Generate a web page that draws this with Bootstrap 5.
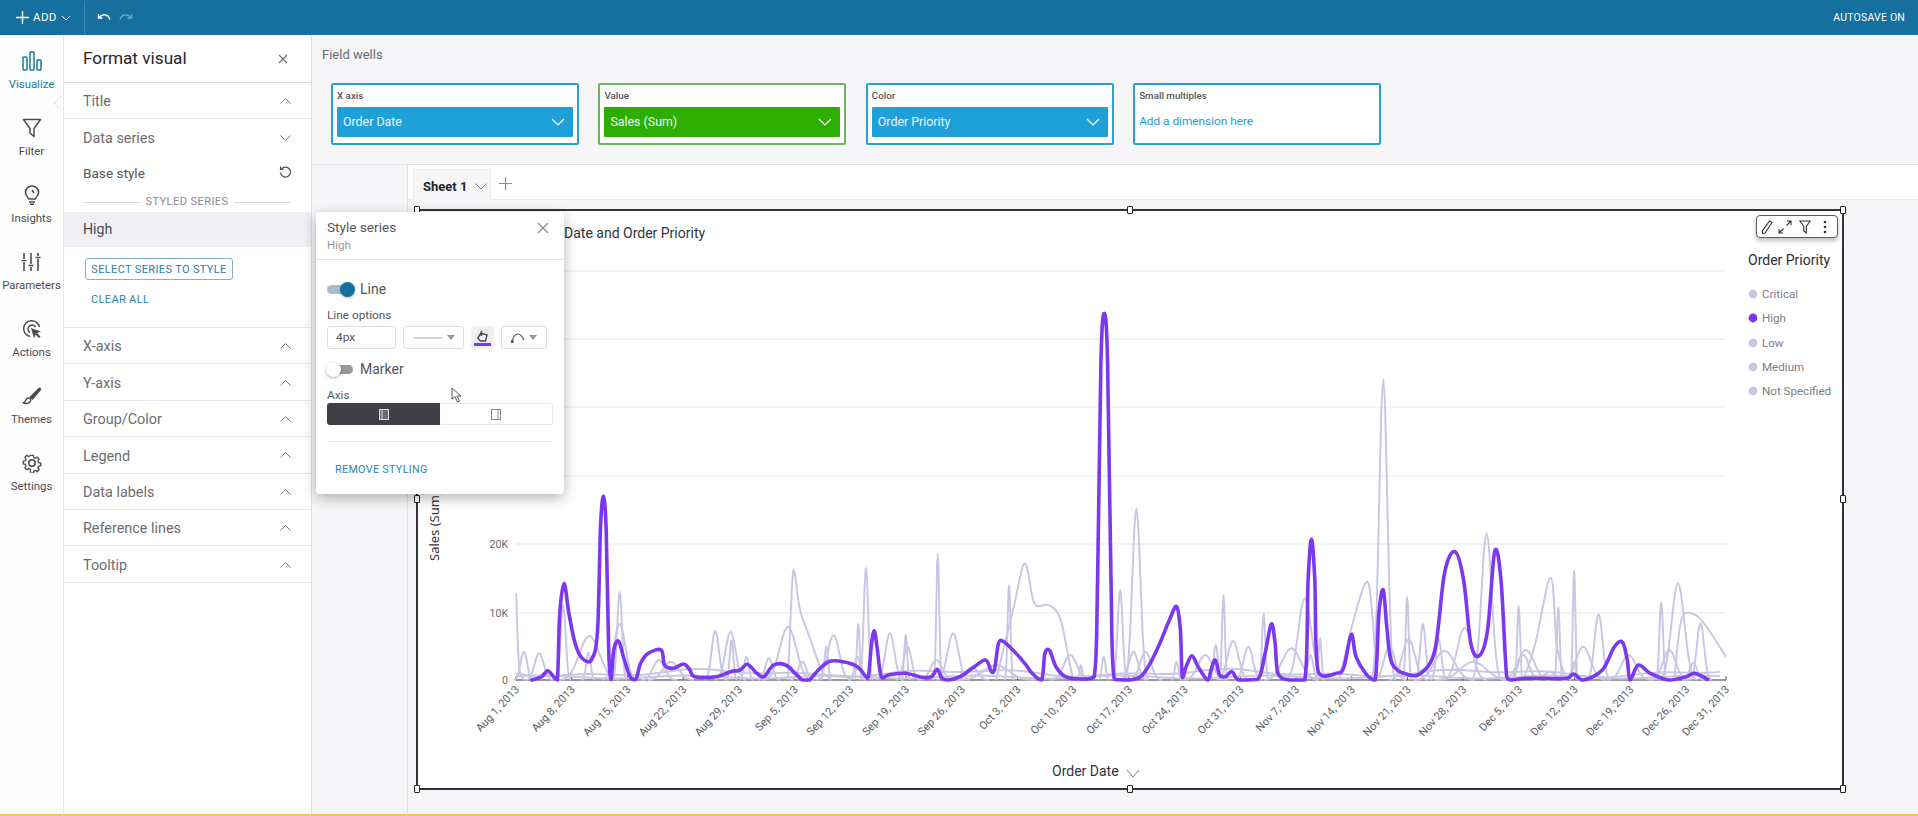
<!DOCTYPE html>
<html lang="en"><head><meta charset="utf-8"><title>Format visual</title>
<link href="https://cdn.jsdelivr.net/npm/bootstrap@5.3.0/dist/css/bootstrap.min.css" rel="stylesheet">
<style>
html,body{height:100%;overflow:hidden}
body{font-family:Roboto,"Noto Sans",sans-serif;color:#3f3f46;background:#f6f6f8;font-size:13px}
.app-shell{height:816px}
.top-strip{height:35px;background:#15709f;color:#fff;flex:none}
.add-text{font-size:11.5px;letter-spacing:.4px}
.top-sep{width:1px;height:34px;background:#3f89b0;margin:0 12px 0 13px}
.autosave{font-size:10.5px;padding-right:13px;letter-spacing:.2px}
.body-row{flex:1;min-height:0}
.rail{width:63px;flex:none;background:#fefefe;padding-top:16px;position:relative}
.rail-item{height:67px;font-size:11.4px;color:#4b4b52;line-height:16px}
.rail-item svg{display:block;margin-bottom:5px}
.rail-item.is-on{color:#147ba8}
.rail-notch{position:absolute;left:56px;top:62px;width:12px;height:12px;background:#fff;transform:rotate(45deg);border-left:1px solid #e4e4ea;border-bottom:1px solid #e4e4ea}
.side-panel{width:249px;flex:none;background:#fff;border-left:1px solid #e4e4ea;border-right:1px solid #dedee4;position:relative}
.panel-head{height:48px;padding:0 23px 0 19px;border-bottom:1.5px solid #dcdce6;font-size:17.2px;color:#26262b}
.acc-row{height:36.4px;padding:3px 20px 0 19px;border-bottom:1.5px solid #e6e6ee;font-size:14.4px;color:#6d6d70;flex:none}
.acc-row svg{margin-top:-2px}
.acc-row.open{border-bottom:0}
.base-row{height:32px;padding:0 19px;font-size:13.6px;color:#55555a;margin-top:1px}
.styled-sep{font-size:11px;letter-spacing:.45px;color:#8b8b90;padding:4px 21px 0 20px;height:23.2px;gap:5px}
.styled-sep i{flex:1;height:1px;background:#d7d7dc}
.high-row{height:35px;padding:0 19px;background:#f0eff4;font-size:14.2px;color:#4a4a50}
.series-btn{display:block;margin:11px 0 0 21px;width:148px;height:22px;padding:1px 0 0;border:1px solid #7fb1cc;border-radius:3px;background:#fff;color:#2c80a8;font-size:11px;letter-spacing:.35px;line-height:19px}
.clear-link{display:block;margin:11px 0 0 27px;font-size:11px;letter-spacing:.35px;color:#2c86ae;line-height:17px}
.clear-wrap{border-bottom:1.5px solid #e6e6ee;height:81px;flex:none}
.main-col{flex:1;min-width:0}
.wells-zone{height:130px;flex:none;padding:13px 0 0 10px;border-bottom:1px solid #dedee2;background:#f6f6f8}
.wells-title{font-size:13px;color:#6a6a70;line-height:14px}
.wells-row{gap:19.4px;margin:21px 0 0 9px}
.well-box{width:248px;height:62px;background:#fff;border:2px solid #2ba0d8;border-radius:2px;padding:3px 4px}
.well-box.is-green{border-color:#6cb75e}
.well-name{font-size:9.8px;font-weight:500;color:#55555a;line-height:15px;height:19px}
.well-pill{height:30px;background:#20a0d9;color:#e9f7ff;font-size:12.4px;padding:0 8px 0 6px;border-radius:1px}
.well-pill.is-green{background:#2eae00}
.well-add{font-size:11.8px;color:#1c9bd1;height:30px}
.tail-zone{flex:1;min-height:0}
.gutter{width:96px;flex:none;border-right:1px solid #dedee2}
.work-col{flex:1;min-width:0}
.tabs-strip{height:35px;background:#fff;border-bottom:1px solid #ececf0;padding:4px 0 0 5px;flex:none}
.sheet-tab{width:78px;height:31px;background:#f6f6f8;border:1px solid #ececf0;border-bottom:0;padding:3px 0 0 9px;font-size:13px;font-weight:700;color:#24242a;gap:8px}
.tab-plus{margin-left:8px}
.viz-box{position:relative;width:1428px;height:581px;margin:9px 0 0 8px;background:#fff;border:2px solid #33333a}
.viz-box>svg{display:block;position:absolute;left:-1px;top:-1px;overflow:visible}
.grip{position:absolute;width:6px;height:8px;background:#fff;border:1.5px solid #222;border-radius:1px;transform:translate(-50%,-50%)}
.gx0{left:-1px}.gx1{left:712px}.gx2{left:1425px}
.gy0{top:-1px}.gy1{top:288px}.gy2{top:578px}
.viz-tools{position:absolute;left:1338px;top:4px;width:82px;height:23px;background:#fff;border:1px solid #5a5a60;border-radius:4px;box-shadow:0 3px 5px rgba(0,0,0,.25);padding:0 4px;gap:5px}
.tool-funnel{margin-left:2px}.tool-kebab{margin-left:7px}
.flyout{position:absolute;left:316px;top:212px;width:248px;height:282px;background:#fff;border-radius:3px;box-shadow:0 4px 14px rgba(0,0,0,.3);z-index:5;padding:0}
.fly-head{height:48px;padding:8px 11px 0 11px;border-bottom:1.5px solid #e4e4ea}
.fly-title{font-size:13.6px;line-height:15px;color:#55555a}
.fly-sub{font-size:11.6px;color:#9a9aa0;line-height:14px;margin-top:3px}
.fly-x{right:15px;top:10px}
.fly-body{padding:0 11px}
.tog-row{height:24px;font-size:14px;color:#55555a}
.tog-first{margin-top:17px}.tog-second{margin-top:8px}
.tog-track{width:26px;height:9px;border-radius:5px;position:relative;margin-right:7px;flex:none}
.tog-track i{position:absolute;top:-3px;width:15px;height:15px;border-radius:50%}
.on-track{background:#a9bccd}
.on-track i{right:-2px;background:#15709f;box-shadow:0 1px 2px rgba(0,0,0,.3)}
.off-track{background:#98989c}
.off-track i{left:-1px;background:#fff;box-shadow:0 1px 3px rgba(0,0,0,.35)}
.mini-label{font-size:11.8px;line-height:14px;color:#55555a;margin-top:7px}
.axis-label{margin-top:7px}
.line-opts{gap:7px;margin-top:4px;height:23px}
.opt-cell{height:23px;border:1px solid #dcdce2;border-radius:3px;background:#fff;font-size:11.8px;color:#55555a}
.w-size{width:69px}.w-dash{width:61px}.w-curve{width:46px}
.paint-cell{width:23px;height:23px;background:#f0f0f3;border-radius:3px;flex:none;position:relative}
.paint-bar{position:absolute;left:3px;right:3px;bottom:3px;height:3px;background:#7c38f0}
.caret-dn{width:0;height:0;border-left:4px solid transparent;border-right:4px solid transparent;border-top:5px solid #98989c;display:inline-block}
.seg-row{width:226px;height:22px;margin-top:1px}
.seg-on{width:113px;background:#3f3f45;border-radius:3px 0 0 3px}
.seg-off{flex:1;border:1px solid #e8e8ec;border-left:0;border-radius:0 3px 3px 0}
.fly-rule{height:1px;background:#e6e6ea;margin:16px 0 0;width:226px}
.remove-link{font-size:10.8px;letter-spacing:.3px;color:#2c86ae;margin:20px 0 0 8px;line-height:15px}
.cursor-mark{position:absolute;left:451px;top:387px;z-index:6}
.bottom-edge{height:2px;flex:none;background:#edc95c}
.chart-tx{font-family:Roboto,"Noto Sans",sans-serif}
.axis-title{font-family:"Noto Sans",sans-serif}
</style></head>
<body>
<div class="app-shell d-flex flex-column position-relative">
  <div class="top-strip d-flex align-items-center">
    <svg class="ms-3" width="13" height="13" viewBox="0 0 13 13"><path d="M6.500 0v13M0 6.500h13" stroke="#fff" stroke-width="1.400"/></svg>
    <span class="add-text ms-1">ADD</span>
    <svg class="ms-1" width="10" height="6" viewBox="0 0 10 6" fill="none"><path d="M1 1l4 4 4-4" stroke="#fff"/></svg>
    <span class="top-sep"></span>
    <svg width="14" height="10" viewBox="0 0 14 10" fill="none"><path d="M1.500 1v4h4M1.800 5C3.500 2.500 6 1.600 8.400 2c2.200.4 3.800 2 4.600 4.600" stroke="#fff" stroke-width="1.400"/></svg>
    <svg class="ms-2" width="14" height="10" viewBox="0 0 14 10" fill="none"><path d="M12.500 1v4h-4M12.200 5C10.500 2.500 8 1.600 5.600 2 3.400 2.400 1.800 4 1 6.600" stroke="#6fa6c4" stroke-width="1.300"/></svg>
    <span class="autosave ms-auto">AUTOSAVE ON</span>
  </div>
  <div class="body-row d-flex">
    <nav class="rail d-flex flex-column align-items-center">
      <div class="rail-item is-on d-flex flex-column align-items-center">
        <svg width="20" height="20" viewBox="0 0 20 20" fill="none" stroke="#147ba8" stroke-width="1.500"><rect x="1" y="6" width="4" height="13" rx=".8"/><rect x="8" y="1" width="4" height="18" rx=".8"/><rect x="15" y="9" width="4" height="10" rx=".8"/></svg><span>Visualize</span></div>
      <div class="rail-item d-flex flex-column align-items-center">
        <svg width="20" height="20" viewBox="0 0 20 20" fill="none" stroke="#4b4b52" stroke-width="1.500"><path d="M1.500 1.500h17L12 10.500v8l-4-3.500v-4.500z" stroke-linejoin="round"/></svg><span>Filter</span></div>
      <div class="rail-item d-flex flex-column align-items-center">
        <svg width="20" height="20" viewBox="0 0 20 20" fill="none" stroke="#4b4b52" stroke-width="1.500"><path d="M6.800 14C5.800 12 3.500 10.500 3.500 7.500a6.500 6.500 0 0 1 13 0c0 3-2.300 4.500-3.300 6.500zM7 17h6M8 19.200h4M10 5l2 3"/></svg><span>Insights</span></div>
      <div class="rail-item d-flex flex-column align-items-center">
        <svg width="20" height="20" viewBox="0 0 20 20" fill="none" stroke="#4b4b52" stroke-width="1.600"><path d="M3 1v6M3 10v9M10 1v11M10 15v4M17 1v3M17 7v12M.500 8.500h5M7.500 13.500h5M14.500 5.500h5"/></svg><span>Parameters</span></div>
      <div class="rail-item d-flex flex-column align-items-center">
        <svg width="20" height="20" viewBox="0 0 20 20" fill="none" stroke="#4b4b52" stroke-width="1.500"><path d="M8 17.500A8 8 0 1 1 17.500 8M8 13.500A4 4 0 1 1 13.500 8"/><path d="M9 9l10 3.500-4 1.500 3.500 3.500-1.500 1.500-3.500-3.500-1.500 4z" fill="#4b4b52" stroke="none"/></svg><span>Actions</span></div>
      <div class="rail-item d-flex flex-column align-items-center">
        <svg width="20" height="20" viewBox="0 0 20 20" fill="none" stroke="#4b4b52" stroke-width="1.500"><path d="M8.500 11L17 2.500c1-.6 1.800.2 1.200 1.200L10.500 13z" fill="#4b4b52"/><path d="M8.300 12.200c-2.500-.8-4.300.6-4.800 2.600-.3 1.200-1 1.700-2 2 1.500 1.200 5.500 1 6.800-1.500.5-1 .5-2.200 0-3.100z"/></svg><span>Themes</span></div>
      <div class="rail-item d-flex flex-column align-items-center">
        <svg width="20" height="20" viewBox="0 0 20 20" fill="none" stroke="#4b4b52" stroke-width="1.500"><circle cx="10" cy="10" r="3.200"/><path d="M8.500 1.500h3l.5 2.500 1.700.8 2.200-1.300 2 2.100-1.300 2.200.7 1.700 2.400.5v3l-2.400.5-.7 1.700 1.300 2.200-2 2.100-2.200-1.300-1.700.7-.5 2.500h-3L8 16.900l-1.700-.7-2.200 1.300-2-2.100 1.300-2.200-.7-1.700L.3 11V8l2.400-.5.700-1.700-1.300-2.200 2-2.100 2.200 1.300L8 2z" transform="translate(1 1) scale(.9)"/></svg><span>Settings</span></div>
      <span class="rail-notch"></span>
    </nav>
    <aside class="side-panel d-flex flex-column">
      <div class="panel-head d-flex align-items-center justify-content-between"><span>Format visual</span>
        <svg width="10" height="10" viewBox="0 0 10 10"><path d="M1 1l8 8M9 1l-8 8" stroke="#6a6a70" stroke-width="1.100"/></svg></div>
      <div class="acc-row d-flex align-items-center justify-content-between"><span>Title</span><svg width="11" height="6" viewBox="0 0 11 6" fill="none"><path d="M.5 5.500l5-5 5 5" stroke="#77777c"/></svg></div>
      <div class="acc-row open d-flex align-items-center justify-content-between"><span>Data series</span><svg width="11" height="6" viewBox="0 0 11 6" fill="none"><path d="M.5.500l5 5 5-5" stroke="#77777c"/></svg></div>
      <div class="base-row d-flex align-items-center justify-content-between"><span>Base style</span><svg width="13" height="13" viewBox="0 0 13 13" fill="none" stroke="#4a4a50" stroke-width="1.200"><path d="M2.500 3A5 5 0 1 1 1.500 6.500M1.500 .5v3h3"/></svg></div>
      <div class="styled-sep d-flex align-items-center"><i></i><span>STYLED SERIES</span><i></i></div>
      <div class="high-row d-flex align-items-center">High</div>
      <div class="clear-wrap">
        <button type="button" class="btn series-btn">SELECT SERIES TO STYLE</button>
        <a class="clear-link text-decoration-none">CLEAR ALL</a>
      </div>
      <div class="acc-row d-flex align-items-center justify-content-between"><span>X-axis</span><svg width="11" height="6" viewBox="0 0 11 6" fill="none"><path d="M.5 5.500l5-5 5 5" stroke="#77777c"/></svg></div>
      <div class="acc-row d-flex align-items-center justify-content-between"><span>Y-axis</span><svg width="11" height="6" viewBox="0 0 11 6" fill="none"><path d="M.5 5.500l5-5 5 5" stroke="#77777c"/></svg></div>
      <div class="acc-row d-flex align-items-center justify-content-between"><span>Group/Color</span><svg width="11" height="6" viewBox="0 0 11 6" fill="none"><path d="M.5 5.500l5-5 5 5" stroke="#77777c"/></svg></div>
      <div class="acc-row d-flex align-items-center justify-content-between"><span>Legend</span><svg width="11" height="6" viewBox="0 0 11 6" fill="none"><path d="M.5 5.500l5-5 5 5" stroke="#77777c"/></svg></div>
      <div class="acc-row d-flex align-items-center justify-content-between"><span>Data labels</span><svg width="11" height="6" viewBox="0 0 11 6" fill="none"><path d="M.5 5.500l5-5 5 5" stroke="#77777c"/></svg></div>
      <div class="acc-row d-flex align-items-center justify-content-between"><span>Reference lines</span><svg width="11" height="6" viewBox="0 0 11 6" fill="none"><path d="M.5 5.500l5-5 5 5" stroke="#77777c"/></svg></div>
      <div class="acc-row d-flex align-items-center justify-content-between"><span>Tooltip</span><svg width="11" height="6" viewBox="0 0 11 6" fill="none"><path d="M.5 5.500l5-5 5 5" stroke="#77777c"/></svg></div>
    </aside>
    <main class="main-col d-flex flex-column">
      <section class="wells-zone">
        <div class="wells-title">Field wells</div>
        <div class="wells-row d-flex">
          <div class="well-box"><div class="well-name">X axis</div><div class="well-pill d-flex align-items-center justify-content-between"><span>Order Date</span><svg width="14" height="8" viewBox="0 0 14 8" fill="none"><path d="M1 1l6 6 6-6" stroke="#fff" stroke-width="1.200"/></svg></div></div>
          <div class="well-box is-green"><div class="well-name">Value</div><div class="well-pill is-green d-flex align-items-center justify-content-between"><span>Sales (Sum)</span><svg width="14" height="8" viewBox="0 0 14 8" fill="none"><path d="M1 1l6 6 6-6" stroke="#fff" stroke-width="1.200"/></svg></div></div>
          <div class="well-box"><div class="well-name">Color</div><div class="well-pill d-flex align-items-center justify-content-between"><span>Order Priority</span><svg width="14" height="8" viewBox="0 0 14 8" fill="none"><path d="M1 1l6 6 6-6" stroke="#fff" stroke-width="1.200"/></svg></div></div>
          <div class="well-box"><div class="well-name">Small multiples</div><div class="well-add d-flex align-items-center">Add a dimension here</div></div>
        </div>
      </section>
      <div class="tail-zone d-flex">
        <div class="gutter"></div>
        <div class="work-col d-flex flex-column">
          <div class="tabs-strip d-flex align-items-start">
            <div class="sheet-tab d-flex align-items-center"><span>Sheet 1</span><svg width="12" height="7" viewBox="0 0 12 7" fill="none"><path d="M.5.500L6 6l5.500-5.500" stroke="#77777c"/></svg></div>
            <svg class="tab-plus mt-2" width="13" height="13" viewBox="0 0 13 13"><path d="M6.500 0v13M0 6.500h13" stroke="#8a8a90" stroke-width="1.100"/></svg>
          </div>
          <div class="viz-box">
            <svg id="chart" width="1428" height="581" viewBox="417 210 1428 581">
              <g id="grid" stroke="#efeff5" stroke-width="1.500"></g>
              <text class="chart-tx" x="564" y="238" font-size="14" fill="#33333a">Date and Order Priority</text>
              <text class="axis-title" x="0" y="0" font-size="13" fill="#33333a" transform="translate(439 561) rotate(-90)">Sales (Sum)</text>
              <g class="chart-tx" font-size="10.500" fill="#66666c" text-anchor="end">
                <text x="508" y="548">20K</text><text x="508" y="617">10K</text><text x="508" y="684">0</text>
              </g>
              <g id="xaxis"></g>
              <g id="pale" fill="none" stroke="#c8c6e3" stroke-width="1.900"></g>
              <path id="lead" fill="none" stroke="#7c38f0" stroke-width="3.600" stroke-linejoin="round" stroke-linecap="round"/>
              <text class="chart-tx" x="1052" y="776" font-size="14" fill="#33333a">Order Date</text>
              <path d="M1127 770l6 7 6-7" fill="none" stroke="#77777c"/>
              <text class="chart-tx" x="1748" y="265" font-size="14" fill="#2e2e34">Order Priority</text>
              <g id="legend" class="chart-tx" font-size="11.600" fill="#7d7d85"></g>
            </svg>
            <span class="grip gx0 gy0"></span><span class="grip gx1 gy0"></span><span class="grip gx2 gy0"></span>
            <span class="grip gx0 gy1"></span><span class="grip gx2 gy1"></span>
            <span class="grip gx0 gy2"></span><span class="grip gx1 gy2"></span><span class="grip gx2 gy2"></span>
            <div class="viz-tools d-flex align-items-center">
              <svg width="12" height="14" viewBox="0 0 12 14" fill="none" stroke="#33333a" stroke-width="1.100"><path d="M8.500 1l2.500 1.500L4 13l-2.500.5-.2-2.500z"/></svg>
              <svg width="14" height="14" viewBox="0 0 14 14" fill="none" stroke="#33333a" stroke-width="1.100"><path d="M9 1h4v4M13 1L8.500 5.500M5 13H1V9M1 13l4.500-4.500"/></svg>
              <svg class="tool-funnel" width="12" height="14" viewBox="0 0 12 14" fill="none" stroke="#33333a" stroke-width="1.100"><path d="M.8 1h10.400L7.300 6.500V13L4.800 11V6.500z"/></svg>
              <svg class="tool-kebab" width="4" height="14" viewBox="0 0 4 14" fill="#33333a"><circle cx="2" cy="2" r="1.300"/><circle cx="2" cy="7" r="1.300"/><circle cx="2" cy="12" r="1.300"/></svg>
            </div>
          </div>
        </div>
      </div>
    </main>
  </div>
  <div class="bottom-edge"></div>

  <div class="flyout card border-0">
    <div class="fly-head position-relative">
      <div class="fly-title">Style series</div><div class="fly-sub">High</div>
      <svg class="position-absolute fly-x" width="12" height="12" viewBox="0 0 12 12"><path d="M1 1l10 10M11 1L1 11" stroke="#85858a" stroke-width="1.100"/></svg>
    </div>
    <div class="fly-body">
      <div class="tog-row tog-first d-flex align-items-center"><span class="tog-track on-track"><i></i></span><span>Line</span></div>
      <div class="mini-label">Line options</div>
      <div class="line-opts d-flex">
        <div class="opt-cell w-size d-flex align-items-center ps-2">4px</div>
        <div class="opt-cell w-dash d-flex align-items-center justify-content-center gap-1"><svg width="30" height="2"><path d="M0 1h30" stroke="#a8a8ac"/></svg><span class="caret-dn"></span></div>
        <div class="paint-cell d-flex align-items-start justify-content-center pt-1"><svg width="13" height="13" viewBox="0 0 13 13" fill="none" stroke="#4a4a50" stroke-width="1.400"><path d="M5 3L1.800 8l2.700 3h5l1.500-6zM5.500 .8v5.200"/></svg><span class="paint-bar"></span></div>
        <div class="opt-cell w-curve d-flex align-items-center justify-content-center gap-1"><svg width="14" height="10" viewBox="0 0 14 10" fill="none" stroke="#555" stroke-width="1.200"><path d="M1 9C2 3 5 1 7 1s4 2 6 6"/><circle cx="1.200" cy="8.500" r="1" fill="#555"/></svg><span class="caret-dn"></span></div>
      </div>
      <div class="tog-row tog-second d-flex align-items-center"><span class="tog-track off-track"><i></i></span><span>Marker</span></div>
      <div class="mini-label axis-label">Axis</div>
      <div class="seg-row d-flex">
        <div class="seg-on d-flex align-items-center justify-content-center"><svg width="10" height="11" viewBox="0 0 10 11" fill="none" stroke="#ddd"><rect x=".5" y=".5" width="9" height="10" fill="#6a6a70"/><path d="M3 .5v10"/></svg></div>
        <div class="seg-off d-flex align-items-center justify-content-center"><svg width="10" height="11" viewBox="0 0 10 11" fill="none" stroke="#888"><rect x=".5" y=".5" width="9" height="10"/><path d="M7 .5v10"/></svg></div>
      </div>
      <div class="fly-rule"></div>
      <div class="remove-link">REMOVE STYLING</div>
    </div>
  </div>
  <svg class="cursor-mark" width="12" height="16" viewBox="0 0 12 16"><path d="M1 1v11l3-2.500L6.500 15l2-1L6 9h4z" fill="#fff" stroke="#444" stroke-width=".9"/></svg>
</div>
<script>
(function(){
  var NS='http://www.w3.org/2000/svg';
  function el(p,n,a,t){var e=document.createElementNS(NS,n);for(var k in a)e.setAttribute(k,a[k]);if(t)e.textContent=t;p.appendChild(e);return e;}
  var Y=function(z){return 480+z/3},XL=function(z){return 410+z/2.09},XR=function(z){return 1100+z/2.09};
  function smooth(p){var d='M'+p[0][0].toFixed(1)+' '+p[0][1].toFixed(1);
    for(var i=0;i<p.length-1;i++){var a=p[i-1]||p[i],b=p[i],c=p[i+1],e=p[i+2]||c;
      var y1=Math.min(680,b[1]+(c[1]-a[1])/6),y2=Math.min(680,c[1]-(e[1]-b[1])/6);
      d+='C'+(b[0]+(c[0]-a[0])/6).toFixed(1)+' '+y1.toFixed(1)+' '+(c[0]-(e[0]-b[0])/6).toFixed(1)+' '+y2.toFixed(1)+' '+c[0].toFixed(1)+' '+c[1].toFixed(1);}
    return d;}
  var grid=document.getElementById('grid');
  [271,339,407,476,544,613].forEach(function(y){el(grid,'line',{x1:516,x2:1726,y1:y,y2:y});});
  var ax=document.getElementById('xaxis');
  el(ax,'line',{x1:516,x2:1726,y1:680,y2:680,stroke:'#77777c','stroke-width':1.6});
  var labels=['Aug 1','Aug 8','Aug 15','Aug 22','Aug 29','Sep 5','Sep 12','Sep 19','Sep 26','Oct 3','Oct 10','Oct 17','Oct 24','Oct 31','Nov 7','Nov 14','Nov 21','Nov 28','Dec 5','Dec 12','Dec 19','Dec 26','Dec 31'];
  labels.forEach(function(t,i){var x=i==22?1726:516+i*55.72;
    el(ax,'line',{x1:x,x2:x,y1:676,y2:680,stroke:'#55555a'});
    el(ax,'text',{'class':'chart-tx','font-size':11,fill:'#5c5c62','text-anchor':'end',transform:'translate('+(x+4)+' 690) rotate(-47)'},t+', 2013');});
  var lg=document.getElementById('legend');
  [['Critical',294],['High',318],['Low',343],['Medium',367],['Not Specified',391]].forEach(function(r){
    el(lg,'circle',{cx:1753,cy:r[1],r:4.4,fill:r[0]=='High'?'#7c38f0':'#c8c6e3'});
    el(lg,'text',{x:1762,y:r[1]+4},r[0]);});
  var pl=[[238,515,18],[270,520,25],[320,375,14],[375,468,55],[373,518,12],[438,335,13],[438,432,32],[520,540,32],[545,545,42],[638,452,20],[670,455,28],[672,480,10],[703,530,13],[750,535,20],[790,440,45],[820,545,22],[870,500,10],[885,465,32],[937,432,8],[935,530,15],[953,262,12],[1003,460,25],[1036,465,8],[1040,500,22],[1103,222,8],[1100,540,32],[1135,460,30],[1175,560,30],[1225,555,70],[1252,315,8],[1380,525,36],[1402,555,8],[1450,530,10]];
  var pr=[[42,330,14],[76,85,22],[70,515,25],[95,515,30],[160,545,10],[220,525,40],[242,495,12],[258,345,8],[278,483,30],[310,500,25],[342,400,9],[400,505,50],[428,355,36],[460,475,8],[440,525,15],[592,-303,22],[605,500,30],[642,350,8],[645,478,35],[675,432,15],[708,478,15],[720,512,55],[762,443,40],[780,545,70],[808,160,28],[875,378,8],[890,510,45],[885,525,30],[958,382,8],[940,575,30],[991,270,7],[991,545,8],[1010,500,40],[1042,402,22],[1105,525,40],[1173,367,10],[1190,510,35],[1208,310,35],[1240,548,20],[1255,430,20]];
  var pale=document.getElementById('pale');
  /* each bump is a bell sampled across its half-width */
  function bump(X,b){var x=b[0],y=b[1],w=b[2],p=[];
    for(var k=-6;k<=6;k++){var t=k/6,g=Math.exp(-Math.pow(t*1.9,2))*(1-t*t);p.push([X(x+t*w*1.15),Y(600+(y-600)*g)]);}
    el(pale,'path',{d:smooth(p)});}
  pl.forEach(function(b){bump(XL,b);});pr.forEach(function(b){bump(XR,b);});
  function trace(X,a){return a.map(function(q){return [X(q[0]),Y(q[1])];});}
  [trace(XL,[[222,340],[228,560],[240,600]]),
   trace(XL,[[790,600],[798,330],[803,273],[815,390],[835,470],[860,570],[880,600]]),
   trace(XL,[[1225,600],[1262,380],[1285,250],[1305,370],[1335,375],[1360,420],[1385,590],[1400,600]]),
   trace(XR,[[885,600],[910,490],[942,293],[955,500],[975,600]]),
   trace(XR,[[500,600],[530,420],[558,305],[570,420],[578,600]]),
   trace(XR,[[1200,600],[1215,420],[1240,402],[1265,435],[1308,530]])
  ].forEach(function(p){el(pale,'path',{d:smooth(p)});});
  /* low pale traces that hug the axis */
  var low=[],low2=[];
  for(var x=516;x<=1726;x+=14){low.push([x,677+Math.sin(x/23)*1.5]);low2.push([x,673+Math.sin(x/41)*2.6+Math.cos(x/17)*1.6]);}
  el(pale,'path',{d:smooth(low)});el(pale,'path',{d:smooth(low2)});
  var a=[[255,600],[275,590],[288,572],[300,590],[308,600],[313,400],[322,310],[332,400],[345,490],[360,535],[380,538],[392,450],[398,150],[404,48],[410,150],[415,500],[420,598],[426,510],[436,484],[448,540],[460,590],[472,598],[482,550],[498,520],[525,510],[532,555],[550,565],[572,552],[585,570],[595,590],[640,590],[670,575],[690,570],[705,553],[725,580],[740,590],[760,555],[785,555],[805,580],[820,600],[835,600],[850,575],[875,545],[905,545],[935,560],[950,585],[958,590],[964,500],[970,452],[976,500],[985,590],[1000,585],[1035,580],[1070,592],[1090,590],[1102,568],[1112,595],[1125,600],[1150,590],[1175,565],[1203,540],[1215,575],[1222,565],[1230,490],[1240,484],[1260,510],[1285,550],[1300,580],[1320,600],[1327,520],[1337,512],[1350,560],[1370,590],[1400,597],[1430,590],[1437,300],[1444,-350],[1451,-500],[1458,-350],[1465,300],[1472,598]];
  var b=[[60,600],[85,590],[105,550],[125,490],[145,420],[160,380],[168,450],[172,590],[180,560],[192,527],[205,560],[225,600],[232,570],[241,540],[250,585],[262,590],[276,575],[290,600],[330,598],[345,520],[358,432],[366,490],[372,580],[395,600],[428,600],[435,300],[442,178],[449,300],[456,575],[495,580],[510,560],[525,463],[535,530],[555,580],[575,600],[583,400],[592,330],[600,450],[610,550],[640,582],[670,580],[700,510],[720,280],[742,215],[760,300],[775,490],[793,527],[810,450],[825,215],[838,300],[850,590],[860,600],[890,595],[930,595],[975,595],[990,582],[1010,600],[1050,570],[1075,500],[1092,487],[1102,540],[1108,600],[1125,555],[1150,580],[1190,600],[1225,590],[1243,580],[1270,598]];
  document.getElementById('lead').setAttribute('d',smooth(trace(XL,a).concat(trace(XR,b))));
})();
</script>
</body></html>
